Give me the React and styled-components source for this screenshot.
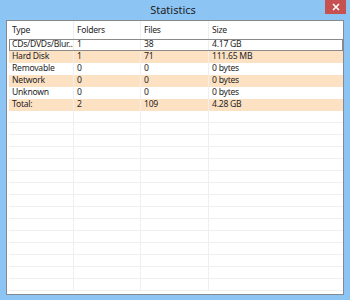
import React from "react"
import styled, { createGlobalStyle } from "styled-components"

const Global = createGlobalStyle`
  html, body {
    margin: 0;
    padding: 0;
    background: #8cc4f4;
  }
  * { box-sizing: border-box; }
`

const rows = [
  { type: "CDs/DVDs/Blur...", folders: "1", files: "38", size: "4.17 GB", selected: true },
  { type: "Hard Disk", folders: "1", files: "71", size: "111.65 MB", alt: true },
  { type: "Removable", folders: "0", files: "0", size: "0 bytes" },
  { type: "Network", folders: "0", files: "0", size: "0 bytes", alt: true },
  { type: "Unknown", folders: "0", files: "0", size: "0 bytes" },
  { type: "Total:", folders: "2", files: "109", size: "4.28 GB", alt: true },
]

const EMPTY_ROWS = 15

export default function App() {
  return (
    <>
      <Global />
      <Window>
        <TitleBar>
          <span />
          <Title>Statistics</Title>
          <CloseButton>
            <svg width="8" height="8" viewBox="0 0 8 8">
              <path d="M1 1 L7 7 M7 1 L1 7" stroke="#fff" strokeWidth="1.6" />
            </svg>
          </CloseButton>
        </TitleBar>
        <Client>
          <Header>
            <Cell>Type</Cell>
            <Cell>Folders</Cell>
            <Cell>Files</Cell>
            <Cell>Size</Cell>
          </Header>
          {rows.map((r, i) => (
            <Row key={i} $alt={r.alt} $selected={r.selected}>
              <Cell>{r.type}</Cell>
              <Cell>{r.folders}</Cell>
              <Cell>{r.files}</Cell>
              <Cell>{r.size}</Cell>
            </Row>
          ))}
          {Array.from({ length: EMPTY_ROWS }).map((_, i) => (
            <Row key={"e" + i} $empty>
              <Cell />
              <Cell />
              <Cell />
              <Cell />
            </Row>
          ))}
        </Client>
      </Window>
    </>
  )
}

const Window = styled.div`
  width: 350px;
  height: 300px;
  display: flex;
  flex-direction: column;
  background: #8cc4f4;
  overflow: hidden;
`

const TitleBar = styled.div`
  height: 20px;
  flex: none;
  display: grid;
  grid-template-columns: 1fr auto 1fr;
  align-items: start;
  padding-right: 4px;
`

const Title = styled.div`
  font-family: "Noto Sans", sans-serif;
  font-size: 11px;
  line-height: 20px;
  color: #1e1e1e;
`

const CloseButton = styled.div`
  justify-self: end;
  width: 21px;
  height: 14px;
  background: #c75050;
  display: flex;
  align-items: center;
  justify-content: center;
`

const Client = styled.div`
  flex: 1;
  margin: 0 6px 5px 6px;
  background: #fff;
  border: 1px solid #868a8e;
  overflow: hidden;
  padding-left: 2px;
  font-family: "Noto Sans", sans-serif;
  font-size: 8.6px;
  letter-spacing: -0.25px;
  color: #1e1e1e;
`

const Cols = `
  display: grid;
  grid-template-columns: 65px 67px 68px 1fr;
`

const Cell = styled.div`
  padding-left: 3px;
  border-right: 1px solid #efefef;
  white-space: nowrap;
  overflow: hidden;
  &:last-child { border-right: none; }
`

const Header = styled.div`
  ${Cols}
  height: 18px;
  line-height: 19px;
`

const Row = styled.div`
  ${Cols}
  height: 12px;
  line-height: 11px;
  background: ${(p) => (p.$alt ? "#fde1c3" : "#fff")};
  border-bottom: ${(p) => (p.$empty ? "1px solid #efefef" : "none")};
  outline: ${(p) => (p.$selected ? "1px solid #8a8a8a" : "none")};
  outline-offset: -1px;
`
